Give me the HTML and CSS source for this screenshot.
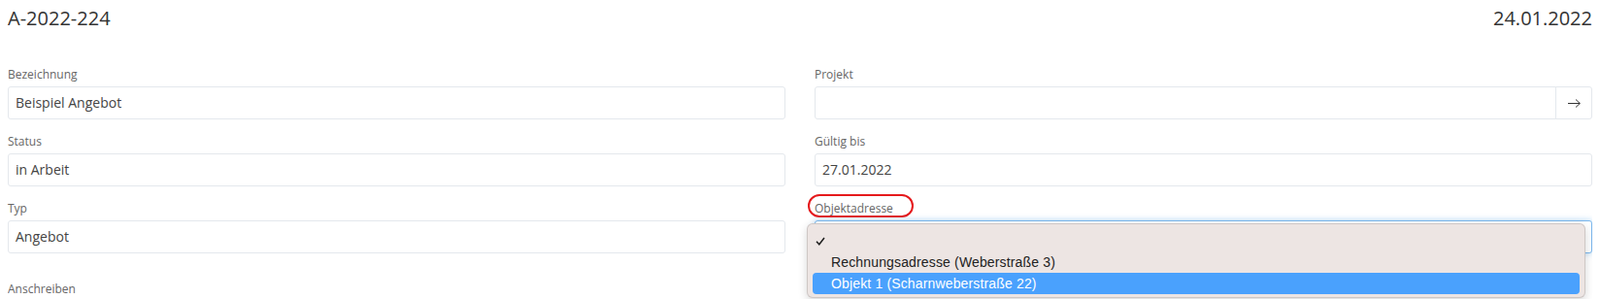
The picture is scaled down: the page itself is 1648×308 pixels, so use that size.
FILE: index.html
```html
<!DOCTYPE html>
<html lang="de">
<head>
  <meta charset="UTF-8" />
  <meta name="viewport" content="width=device-width, initial-scale=1.0"/>
  <title>Angebot A-2022-224</title>
  <link rel="stylesheet" href="styles.css">
</head>
<body>

  <div class="doc-head">
    <h1>A-2022-224</h1>
    <span class="doc-date">24.01.2022</span>
  </div>

  <div class="form-grid">
    <div class="form-col">
      <div class="form-group">
        <label>Bezeichnung</label>
        <div class="form-control">Beispiel Angebot</div>
      </div>
      <div class="form-group">
        <label>Status</label>
        <div class="form-control">in Arbeit</div>
      </div>
      <div class="form-group">
        <label>Typ</label>
        <div class="form-control">Angebot</div>
      </div>
    </div>

    <div class="form-col">
      <div class="form-group">
        <label>Projekt</label>
        <div class="input-group">
          <div class="form-control"></div>
          <button class="input-btn">
            <svg width="13" height="9" viewBox="0 0 13 9"><path d="M0 4.5H12.3M8 0.5L12.3 4.5L8 8.5" fill="none" stroke="#333" stroke-width="1"/></svg>
          </button>
        </div>
      </div>
      <div class="form-group">
        <label>Gültig bis</label>
        <div class="form-control">27.01.2022</div>
      </div>
      <div class="form-group">
        <label><span class="marked">Objektadresse</span></label>
        <div class="select-wrap">
          <div class="form-control is-focus"></div>
          <div class="select-menu">
            <div class="menu-item">
              <span class="check"><svg width="10" height="9" viewBox="0 0 10 9"><path d="M1 4.8L3.8 7.8L9 1" fill="none" stroke="#1e1e1e" stroke-width="1.5"/></svg></span>
              <span></span>
            </div>
            <div class="menu-item">
              <span class="check"></span>
              <span>Rechnungsadresse (Weberstraße 3)</span>
            </div>
            <div class="menu-item active">
              <span class="check"></span>
              <span>Objekt 1 (Scharnweberstraße 22)</span>
            </div>
          </div>
        </div>
      </div>
    </div>
  </div>

  <div class="form-group section">
    <label>Anschreiben</label>
  </div>

</body>
</html>
```

FILE: styles.css
```css
html {
  overflow: hidden;
}

body {
  font-family: "Open Sans", sans-serif;
  margin: 8px;
  color: #333;
  background-color: #fff;
}

.doc-head {
  display: flex;
  justify-content: space-between;
  align-items: baseline;
  margin-bottom: 38px;
}

.doc-head h1,
.doc-date {
  margin: 0;
  font-size: 20px;
  font-weight: 400;
  line-height: 22px;
  color: #333;
}

.form-grid {
  display: grid;
  grid-template-columns: 1fr 1fr;
  column-gap: 30px;
}

.form-group {
  margin-bottom: 14px;
}

.form-group label {
  display: block;
  font-size: 12px;
  line-height: 17px;
  color: #666;
  margin-bottom: 4px;
}

.form-control {
  box-sizing: border-box;
  height: 34px;
  padding: 0 7px;
  border: 1px solid #e4e8ed;
  border-radius: 3px;
  font-size: 14px;
  line-height: 32px;
  color: #444;
  background-color: #fff;
}

.form-control.is-focus {
  border-color: #7ab6ec;
  box-shadow: 0 0 6px rgba(102, 175, 233, 0.55);
}

.input-group {
  display: flex;
}

.input-group .form-control {
  flex: 1;
  border-radius: 3px 0 0 3px;
}

.input-btn {
  box-sizing: border-box;
  width: 38px;
  height: 34px;
  margin-left: -1px;
  padding: 0;
  display: flex;
  align-items: center;
  justify-content: center;
  border: 1px solid #e4e8ed;
  border-radius: 0 3px 3px 0;
  background-color: #fff;
}

/* red annotation ring around the label */
.marked {
  position: relative;
  display: inline-block;
}

.marked::after {
  content: "";
  position: absolute;
  left: -7px;
  right: -21px;
  top: -6px;
  bottom: -1px;
  border: 2px solid #e5191c;
  border-radius: 12px;
}

.select-wrap {
  position: relative;
}

.select-menu {
  position: absolute;
  left: -8px;
  right: 7px;
  top: 3px;
  padding: 6px 5px 3px 5px;
  background-color: #ede5e3;
  border: 1px solid rgba(0, 0, 0, 0.13);
  border-radius: 6px;
  box-shadow: 0 3px 10px rgba(0, 0, 0, 0.16);
  font-family: "Liberation Sans", Arial, sans-serif;
  font-size: 14px;
  letter-spacing: 0.15px;
  color: #222;
}

.menu-item {
  display: flex;
  align-items: center;
  height: 22px;
  border-radius: 4px;
}

.menu-item .check {
  width: 19px;
  flex: none;
  display: flex;
  padding-left: 3px;
  box-sizing: border-box;
}

.menu-item.active {
  background-color: #4aa1fd;
  color: #fff;
}

.section {
  padding-top: 14px;
}
```
